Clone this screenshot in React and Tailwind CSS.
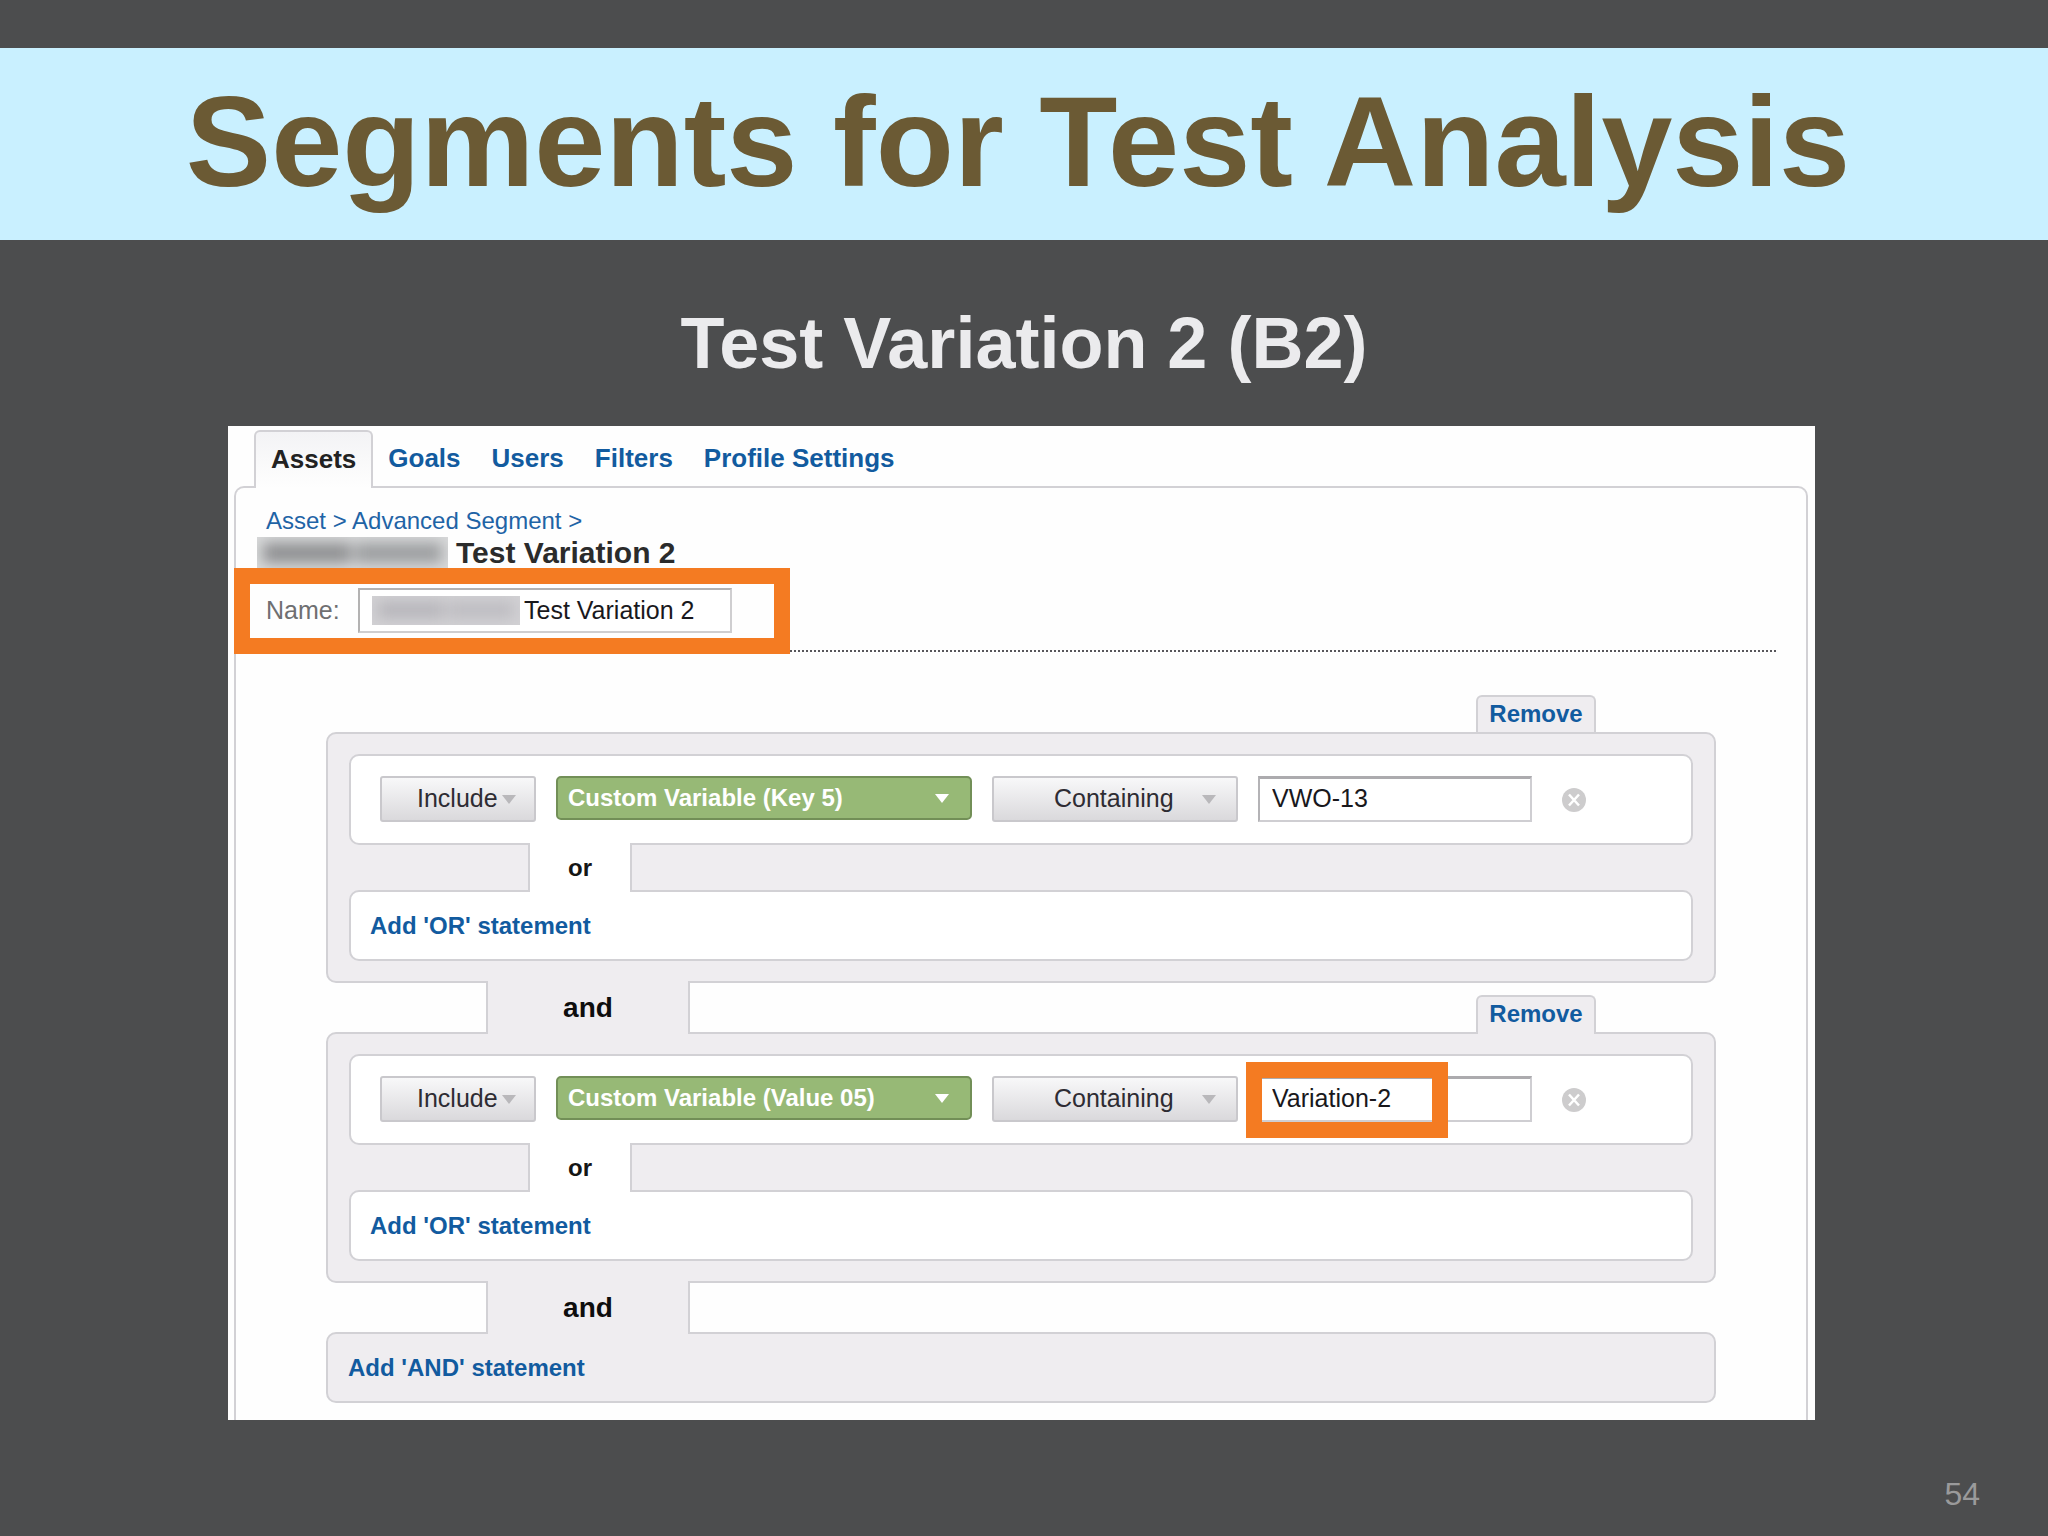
import React from "react";

const tabs = ["Goals", "Users", "Filters", "Profile Settings"];

function Caret({ className }) {
  return (
    <svg viewBox="0 0 14 9" aria-hidden="true" className={className}>
      <path d="M0 0h14L7 9z" fill="currentColor" />
    </svg>
  );
}

function GrayDropdown({ label, value, wrapper, padding, caret }) {
  return (
    <div className={`relative shrink-0 ${wrapper}`}>
      <select
        aria-label={label}
        defaultValue={value}
        className={`h-[46px] w-full appearance-none rounded-[3px] border-2 border-[#c9c8cc] bg-linear-to-b from-[#f8f8f9] to-[#dad9dc] text-[25px] text-[#2e2c33] ${padding}`}
      >
        <option>{value}</option>
      </select>
      <Caret className={`pointer-events-none absolute top-[19px] h-[9px] w-[14px] text-[#b9b8bb] ${caret}`} />
    </div>
  );
}

function ConditionRow({ variable, match, highlighted }) {
  return (
    <div className="flex items-start gap-5 rounded-[10px] border-2 border-[#d2d1d5] bg-white pt-5 pr-[105px] pb-[21px] pl-[29px]">
      <GrayDropdown label="Include or exclude" value="Include" wrapper="w-[156px]" padding="pl-[35px]" caret="right-5" />
      <div className="relative min-w-0 flex-1">
        <select
          aria-label="Dimension"
          defaultValue={variable}
          className="h-[44px] w-full appearance-none rounded-[5px] border-2 border-[#728f57] bg-[#97b976] pl-[10px] text-[24px] font-bold text-white"
        >
          <option>{variable}</option>
        </select>
        <Caret className="pointer-events-none absolute top-[18px] right-[22px] h-[9px] w-4 text-white" />
      </div>
      <GrayDropdown label="Match type" value="Containing" wrapper="w-[246px]" padding="pl-[60px]" caret="right-[22px]" />
      <div className="relative w-[274px] shrink-0">
        <input
          type="text"
          aria-label="Value"
          defaultValue={match}
          className="h-[46px] w-full border-2 border-t-3 border-[#cfced2] border-t-[#acabae] border-l-[#b4b3b6] bg-white pb-[3px] pl-3 text-[25px] text-[#19181c]"
        />
        {highlighted && (
          <div className="pointer-events-none absolute -top-[14px] -bottom-4 -left-3 w-[202px] border-16 border-[#f47b22]" />
        )}
      </div>
      <button type="button" aria-label="Remove condition" className="mt-3 ml-[10px] shrink-0">
        <svg viewBox="0 0 24 24" className="size-6">
          <circle cx="12" cy="12" r="12" fill="#cdcccd" />
          <path d="M7 6.500l10 11M17 6.500l-10 11" stroke="#ffffff" strokeWidth="2.500" />
        </svg>
      </button>
    </div>
  );
}

function Segment({ variable, match, highlighted }) {
  return (
    <section className="rounded-[10px] border-2 border-[#d2d1d5] bg-[#efedf0] px-[21px] py-5">
      <ConditionRow variable={variable} match={match} highlighted={highlighted} />
      <div className="relative -my-[2px] ml-[179px] flex h-[49px] w-[104px] items-center justify-center border-x-2 border-[#d2d1d5] bg-white text-[24px] font-bold text-[#151515]">
        or
      </div>
      <div className="flex h-[71px] items-center rounded-[10px] border-2 border-[#d2d1d5] bg-white pl-[19px]">
        <button type="button" className="text-[24px] font-bold text-[#125b9f]">
          Add 'OR' statement
        </button>
      </div>
    </section>
  );
}

function RemoveTab() {
  return (
    <button
      type="button"
      className="h-[39px] w-[120px] rounded-t-[6px] border-2 border-b-0 border-[#d2d1d5] bg-[#efedf0] pb-1 text-[24px] leading-8 font-bold text-[#125b9f]"
    >
      Remove
    </button>
  );
}

function AndConnector({ removable }) {
  return (
    <div className="relative -my-[2px] flex h-[53px] items-end justify-between pr-[120px] pl-[160px]">
      <div className="flex h-full w-[204px] items-center justify-center border-x-2 border-[#d2d1d5] bg-[#efedf0] text-[28px] font-bold text-[#0e0e0e]">
        and
      </div>
      {removable && <RemoveTab />}
    </div>
  );
}

export default function App() {
  return (
    <main className="flex min-h-screen w-full flex-col bg-[#4c4d4e] pt-12 font-['Liberation_Sans',Arial,sans-serif]">
      <header className="flex h-[192px] items-center justify-center bg-[#c9f0ff] pr-3 pb-1">
        <h1 className="text-[128px] leading-none font-bold text-[#6b5a34]">Segments for Test Analysis</h1>
      </header>

      <h2 className="mt-[59px] mb-[39px] text-center text-[72px] leading-[88px] font-bold text-[#ebebed]">
        Test Variation 2 (B2)
      </h2>

      <div className="mr-[233px] ml-[228px] bg-[#fefefe] pt-1 pr-[7px] pl-[6px]">
        <nav className="relative flex items-stretch gap-[31px] pl-5 text-[26px] font-bold text-[#125b9f]">
          <a
            href="#assets"
            className="-mr-4 -mb-[2px] flex h-[58px] items-center rounded-t-[6px] border-2 border-b-0 border-[#d2d1d5] bg-linear-to-b from-[#f3f3f5] to-[#fefefe] px-[15px] pb-[2px] text-[#222222]"
          >
            Assets
          </a>
          {tabs.map((tab) => (
            <a key={tab} href="#tab" className="flex items-center">
              {tab}
            </a>
          ))}
        </nav>

        <div className="rounded-t-[10px] border-2 border-b-0 border-[#d2d1d5] px-[30px] pt-[17px] pb-[17px]">
          <p className="text-[24px] leading-8 text-[#1f64a6]">
            <a href="#asset">Asset</a> &gt; <a href="#segment">Advanced Segment</a> &gt;
          </p>
          <div className="flex h-8 items-center gap-2">
            <span className="-ml-[9px] h-full w-[191px] overflow-hidden bg-[#d9dadb] p-[6px]">
              <span className="flex h-5 gap-1 blur-[7px]">
                <span className="h-5 flex-1 bg-[#8f9092]" />
                <span className="h-5 flex-1 bg-[#9c9ea0]" />
              </span>
            </span>
            <h3 className="text-[30px] leading-8 font-bold text-[#2b2b2b]">Test Variation 2</h3>
          </div>

          <div className="relative mt-[19px] flex h-[45px] w-[466px] items-center gap-5">
            <label htmlFor="segment-name" className="w-[72px] text-[25px] text-[#6f6f71]">
              Name:
            </label>
            <div className="relative flex-1">
              <input
                id="segment-name"
                type="text"
                defaultValue="Test Variation 2"
                className="h-[45px] w-full border-2 border-[#cfced0] border-t-[#b3b2b2] border-l-[#b3b2b2] bg-white pl-[164px] text-[25px] text-[#19181c]"
              />
              <span className="pointer-events-none absolute top-2 left-[14px] h-[29px] w-[148px] overflow-hidden bg-[#d2d1d4] p-[6px]">
                <span className="flex h-4 gap-1 blur-[7px]">
                  <span className="h-4 flex-1 bg-[#b6b5ba]" />
                  <span className="h-4 flex-1 bg-[#bdbcc1]" />
                </span>
              </span>
            </div>
            <div className="pointer-events-none absolute -top-5 -right-[58px] -bottom-[21px] -left-8 border-16 border-[#f47b22]" />
          </div>
          <hr className="mt-[17px] border-t-2 border-dotted border-[#57565a]" />

          <div className="px-[60px] pt-[43px]">
            <div className="-mb-[2px] flex justify-end pr-[120px]">
              <RemoveTab />
            </div>
            <div className="relative">
              <Segment variable="Custom Variable (Key 5)" match="VWO-13" />
            </div>
            <AndConnector removable />
            <Segment variable="Custom Variable (Value 05)" match="Variation-2" highlighted />
            <AndConnector />
            <div className="flex h-[71px] items-center rounded-[10px] border-2 border-[#d2d1d5] bg-[#efedf0] pl-5">
              <button type="button" className="text-[24px] font-bold text-[#125b9f]">
                Add 'AND' statement
              </button>
            </div>
          </div>
        </div>
      </div>

      <footer className="mt-auto pr-[68px] pb-[18px] text-right text-[32px] leading-[48px] text-[#9a9a9b]">54</footer>
    </main>
  );
}
